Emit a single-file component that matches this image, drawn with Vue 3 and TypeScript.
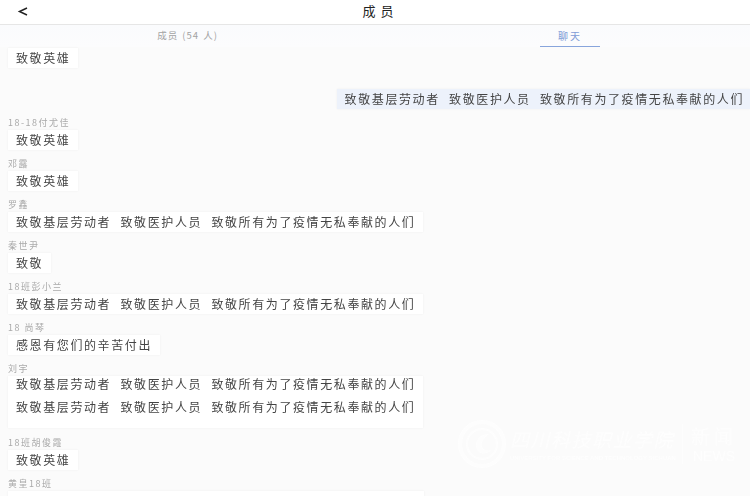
<script setup lang="ts">
interface Message {
  name: string
  lines: string[]
}

const salute = '致敬基层劳动者 致敬医护人员 致敬所有为了疫情无私奉献的人们'

const messages: Message[] = [
  { name: '18-18付尤佳', lines: ['致敬英雄'] },
  { name: '邓露', lines: ['致敬英雄'] },
  { name: '罗鑫', lines: [salute] },
  { name: '秦世尹', lines: ['致敬'] },
  { name: '18班彭小兰', lines: [salute] },
  { name: '18 尚琴', lines: ['感恩有您们的辛苦付出'] },
  { name: '刘宇', lines: [salute, salute] },
  { name: '18班胡俊霞', lines: ['致敬英雄'] },
  // last bubble runs off the bottom of the window, its text is not in view
  { name: '黄皇18班', lines: [] },
]
</script>

<template>
  <div class="page">
    <header class="topbar">
      <svg class="back" width="12" height="12" viewBox="0 0 12 12">
        <path d="M10 2 L2.5 5.5 L10 9" fill="none" stroke="#222" stroke-width="1.5" />
      </svg>
      <span class="title">成员</span>
    </header>

    <nav class="tabs">
      <div class="tab">成员 (54 人)</div>
      <div class="tab active"><span>聊天</span></div>
    </nav>

    <main class="chat">
      <div class="bubble first">致敬英雄</div>
      <div class="mine-row">
        <div class="bubble mine">{{ salute }}</div>
      </div>
      <div v-for="(m, i) in messages" :key="i" class="msg">
        <div class="name">{{ m.name }}</div>
        <div class="bubble" :class="{ multi: m.lines.length > 1, tail: !m.lines.length }">
          <p v-for="(line, j) in m.lines" :key="j">{{ line }}</p>
        </div>
      </div>
    </main>

    <div class="watermark">
      <svg class="seal" width="48" height="48" viewBox="0 0 48 48">
        <circle cx="24" cy="24" r="22" fill="none" stroke="#fff" stroke-width="4" />
        <circle cx="24" cy="24" r="15" fill="none" stroke="#fff" stroke-width="2" />
        <path d="M31 14 C20 14 15 24 20 31 C24 35 30 34 33 30 C27 32 22 28 24 22 C25 19 28 16 31 14 Z" fill="#fff" />
      </svg>
      <div class="wm-school">
        <div class="wm-cn">四川科技职业学院</div>
        <div class="wm-en">UNIVERSITY FOR SCIENCE AND TECHNOLOGY SICHUAN</div>
      </div>
      <div class="wm-news">
        <div class="wm-xw">新闻</div>
        <div class="wm-nw">NEWS</div>
      </div>
    </div>
  </div>
</template>

<style>
html,
body {
  margin: 0;
  background: #fbfbfb;
}
</style>

<style scoped>
.page {
  position: relative;
  width: 750px;
  height: 496px;
  overflow: hidden;
  background: #fbfbfb;
  font-family: "Noto Sans CJK SC", "Liberation Sans", sans-serif;
  color: #444;
}

.topbar {
  display: flex;
  align-items: center;
  justify-content: center;
  height: 24px;
  background: #fff;
  border-bottom: 1px solid #e6e6e6;
  position: relative;
}

.back {
  position: absolute;
  left: 17px;
  top: 6px;
}

.title {
  margin-left: 11px;
  margin-bottom: 3px;
  font-size: 13px;
  letter-spacing: 5px;
  color: #222;
  line-height: 21px;
}

.tabs {
  display: flex;
  height: 22px;
  background: linear-gradient(#fafbfd, #fcfcfd);
}

.tab {
  box-sizing: border-box;
  flex: none;
  width: 375px;
  text-align: center;
  font-size: 9.5px;
  letter-spacing: 1px;
  word-spacing: 1px;
  line-height: 21px;
  color: #a3a3a3;
}

.tab.active {
  padding-left: 15px;
  color: #7f9bd6;
}

.tab.active span {
  display: inline-block;
  width: 60px;
  height: 21px;
  border-bottom: 1px solid #88a5dc;
  font-size: 10px;
  letter-spacing: 2px;
}

.chat {
  display: flex;
  flex-direction: column;
  padding-top: 1px;
  filter: blur(0.35px);
}

.bubble {
  align-self: flex-start;
  margin-left: 8px;
  padding: 0 8px;
  background: #fff;
  font-size: 12px;
  letter-spacing: 1.6px;
  word-spacing: 5px;
  line-height: 20px;
  color: #444;
  white-space: pre;
  box-shadow: 0 0 2px rgba(0, 0, 0, 0.06);
}

.bubble p {
  margin: 0;
}

.bubble.multi {
  padding-bottom: 6px;
}

.bubble.multi p {
  line-height: 16px;
  margin-bottom: 7px;
}

.bubble.tail {
  width: 400px;
  height: 20px;
}

.mine-row {
  display: flex;
  justify-content: flex-end;
  margin-top: 21px;
  margin-bottom: 6px;
}

.mine {
  margin-left: 0;
  padding-right: 6px;
  background: #edf2fb;
}

.msg {
  display: flex;
  flex-direction: column;
  height: 41px;
  flex: none;
}

.msg:has(.multi) {
  height: 74px;
}

.name {
  height: 14px;
  margin-left: 8px;
  margin-bottom: 1px;
  font-size: 9px;
  letter-spacing: 1.5px;
  line-height: 16px;
  color: #aaa;
}

.watermark {
  position: absolute;
  left: 458px;
  top: 420px;
  display: flex;
  align-items: center;
  color: #fff;
  opacity: 0.7;
}

.wm-school {
  width: 164px;
  margin-left: 4px;
  margin-right: 8px;
}

.wm-cn {
  font-size: 19px;
  letter-spacing: 1.5px;
  line-height: 28px;
  font-style: italic;
  white-space: nowrap;
}

.wm-en {
  font-family: "Liberation Sans", sans-serif;
  font-size: 6px;
  white-space: nowrap;
  font-weight: 700;
  line-height: 10px;
}

.wm-news {
  border-left: 1px solid #fff;
  padding-left: 8px;
  text-align: center;
}

.wm-xw {
  font-size: 19px;
  letter-spacing: 4px;
  line-height: 24px;
}

.wm-nw {
  font-family: "Liberation Sans", sans-serif;
  font-size: 14px;
  line-height: 16px;
}
</style>
